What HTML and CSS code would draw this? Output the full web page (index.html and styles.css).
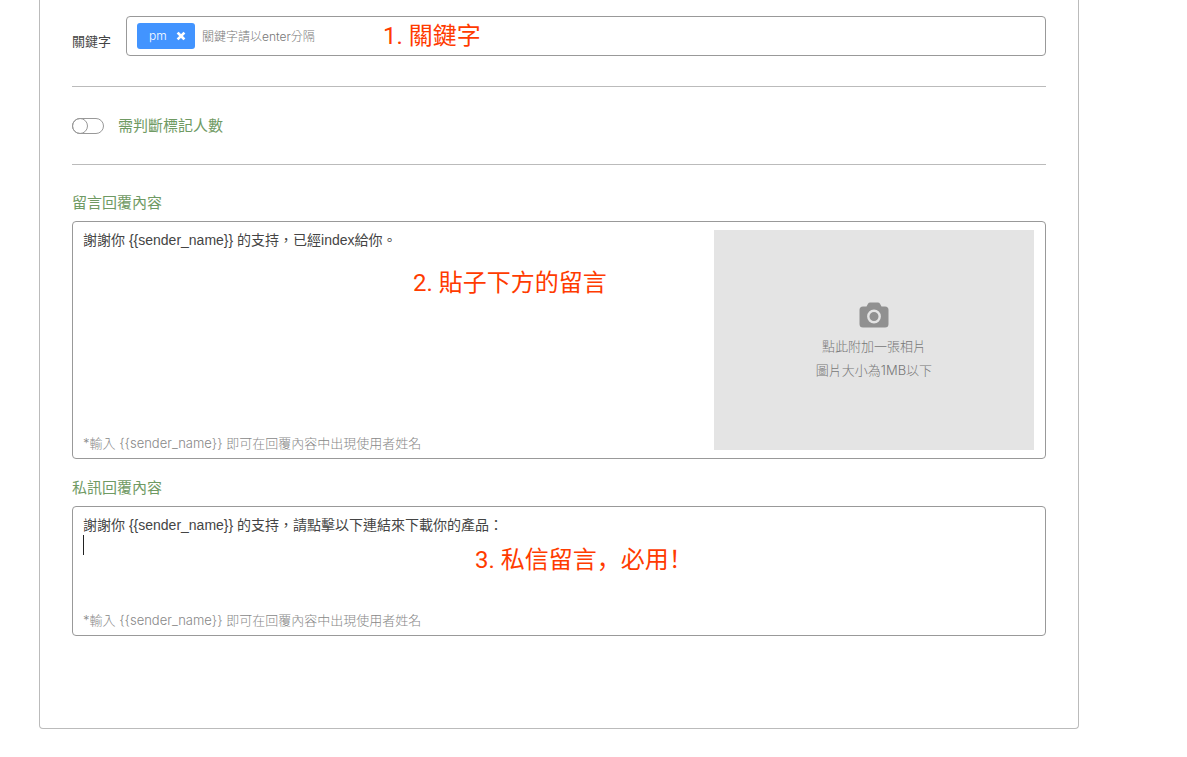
FILE: index.html
```html
<!DOCTYPE html>
<html lang="zh-Hant">
<head>
    <meta charset="UTF-8">
    <meta name="viewport" content="width=device-width, initial-scale=1.0">
    <title>自動回覆設定</title>
    <link rel="stylesheet" href="styles.css">
</head>
<body>
    <main class="panel">
        <div class="keyword-row">
            <label class="keyword-label" for="keyword">關鍵字</label>
            <div class="keyword-box">
                <span class="tag">
                    pm
                    <button class="tag-remove" type="button" aria-label="移除 pm">
                        <svg width="10" height="10" viewBox="0 0 10 10"><path d="M2.500 2.500L7.500 7.500M7.500 2.500L2.500 7.500" stroke="#fff" stroke-width="2.600" stroke-linecap="square"/></svg>
                    </button>
                </span>
                <input class="keyword-input" type="text" id="keyword" placeholder="關鍵字請以enter分隔">
                <span class="note note-keyword">1. 關鍵字</span>
            </div>
        </div>

        <div class="toggle-row">
            <input class="toggle" type="checkbox" id="tag-count">
            <label class="title" for="tag-count">需判斷標記人數</label>
        </div>

        <section class="reply">
            <label class="title" for="comment-reply">留言回覆內容</label>
            <div class="reply-box">
                <div class="reply-main">
                    <textarea class="reply-text" id="comment-reply">謝謝你 {{sender_name}} 的支持，已經index給你。</textarea>
                    <p class="hint">*輸入 {{sender_name}} 即可在回覆內容中出現使用者姓名</p>
                </div>
                <button class="photo" type="button">
                    <svg class="camera" width="30" height="26" viewBox="0 0 30 26">
                        <path d="M4 4.500H7.500L9 1.800Q9.700 .5 11.200 .5H18.800Q20.300 .5 21 1.800L22.500 4.500H26Q29.500 4.500 29.500 8V22Q29.500 25.500 26 25.500H4Q.5 25.500 .5 22V8Q.5 4.500 4 4.500Z" fill="#909090"/>
                        <circle cx="15" cy="14.500" r="5.700" fill="none" stroke="#e4e4e4" stroke-width="2.400"/>
                    </svg>
                    <span>點此附加一張相片</span>
                    <span>圖片大小為1MB以下</span>
                </button>
                <span class="note note-comment">2. 貼子下方的留言</span>
            </div>
        </section>

        <section class="reply">
            <label class="title" for="private-reply">私訊回覆內容</label>
            <div class="reply-box">
                <div class="reply-main">
                    <textarea class="reply-text reply-text-short" id="private-reply">謝謝你 {{sender_name}} 的支持，請點擊以下連結來下載你的產品：
</textarea>
                    <p class="hint">*輸入 {{sender_name}} 即可在回覆內容中出現使用者姓名</p>
                </div>
                <span class="caret"></span>
                <span class="note note-private" lang="zh-Hans">3. 私信留言，必用！</span>
            </div>
        </section>
    </main>
</body>
</html>
```
FILE: styles.css
```css
*, *::before {
    box-sizing: border-box;
}
body {
    margin: 0;
    background: #fff;
    color: #444;
    font-family: Inter, "Noto Sans CJK TC", sans-serif;
    font-size: 14px;
    font-weight: 300;
    line-height: 20px;
}
button, input, textarea {
    font: inherit;
    color: inherit;
}
.panel {
    margin: 0 108px 28px 39px;
    padding: 16px 32px 92px;
    border: 1px solid #bbb;
    border-top: none;
    border-radius: 0 0 4px 4px;
}
.keyword-row {
    display: flex;
    align-items: center;
    gap: 14px;
    padding-bottom: 30px;
    border-bottom: 1px solid #bbb;
}
.keyword-label {
    padding-top: 10px;
    width: 40px;
    font-size: 13px;
    font-weight: 400;
    white-space: nowrap;
}
.keyword-box {
    position: relative;
    flex: 1;
    display: flex;
    align-items: center;
    gap: 7px;
    height: 40px;
    padding: 0 10px;
    border: 1px solid #999;
    border-radius: 4px;
}
.tag {
    display: flex;
    align-items: center;
    justify-content: space-between;
    width: 58px;
    height: 26px;
    padding: 0 9px 0 12px;
    border-radius: 3px;
    background: #4294ff;
    color: #fff;
    font-size: 12px;
}
.tag-remove {
    display: flex;
    padding: 0;
    border: none;
    background: none;
    cursor: pointer;
}
.keyword-input {
    flex: 1;
    min-width: 0;
    padding: 2px 0 0;
    border: none;
    outline: none;
    background: none;
    font-size: 12px;
}
.keyword-input::placeholder {
    color: #777;
    opacity: 1;
}
.toggle-row {
    display: flex;
    align-items: center;
    gap: 14px;
    height: 78px;
    border-bottom: 1px solid #bbb;
    margin-bottom: 28px;
}
.toggle {
    appearance: none;
    display: flex;
    width: 32px;
    height: 16px;
    margin: 0;
    border: 1px solid #999;
    border-radius: 8px;
    cursor: pointer;
}
.toggle::before {
    content: "";
    width: 16px;
    height: 16px;
    margin: -1px;
    border: 1px solid #999;
    border-radius: 50%;
}
.toggle:checked::before {
    margin-left: 15px;
}
.title {
    color: #6f9a63;
    font-size: 15px;
    font-weight: 400;
}
.reply {
    display: flex;
    flex-direction: column;
    gap: 8px;
}
.reply + .reply {
    margin-top: 19px;
}
.reply-box {
    position: relative;
    display: flex;
    padding: 8px 11px 5px 10px;
    border: 1px solid #999;
    border-radius: 4px;
}
.reply-main {
    flex: 1;
    display: flex;
    flex-direction: column;
}
.reply-text {
    flex: 1;
    width: 100%;
    padding: 0;
    border: none;
    outline: none;
    resize: none;
    background: none;
    overflow: hidden;
    font-family: "Liberation Sans", "Noto Sans CJK TC", sans-serif;
    font-weight: 400;
}
.reply-text-short {
    min-height: 95px;
}
.hint {
    margin: 0;
    color: #888;
    font-size: 13px;
}
.photo {
    display: flex;
    flex-direction: column;
    align-items: center;
    justify-content: center;
    width: 320px;
    height: 220px;
    margin-bottom: 3px;
    padding: 4px 0 0;
    border: none;
    background: #e4e4e4;
    color: #777;
    font-size: 13px;
    line-height: 24px;
    cursor: pointer;
}
.camera {
    margin-bottom: 6px;
}
.caret {
    position: absolute;
    top: 28px;
    left: 10px;
    width: 1px;
    height: 20px;
    background: #222;
}
.note {
    position: absolute;
    color: #ff3b00;
    font-family: Roboto, "Noto Sans CJK TC", sans-serif;
    font-size: 24px;
    font-weight: 400;
    line-height: 32px;
    white-space: nowrap;
    pointer-events: none;
}
.note-keyword {
    top: 3px;
    left: 256px;
}
.note-comment {
    top: 45px;
    left: 340px;
}
.note-private {
    top: 37px;
    left: 402px;
    font-family: Roboto, "Noto Sans CJK SC", sans-serif;
}
```
